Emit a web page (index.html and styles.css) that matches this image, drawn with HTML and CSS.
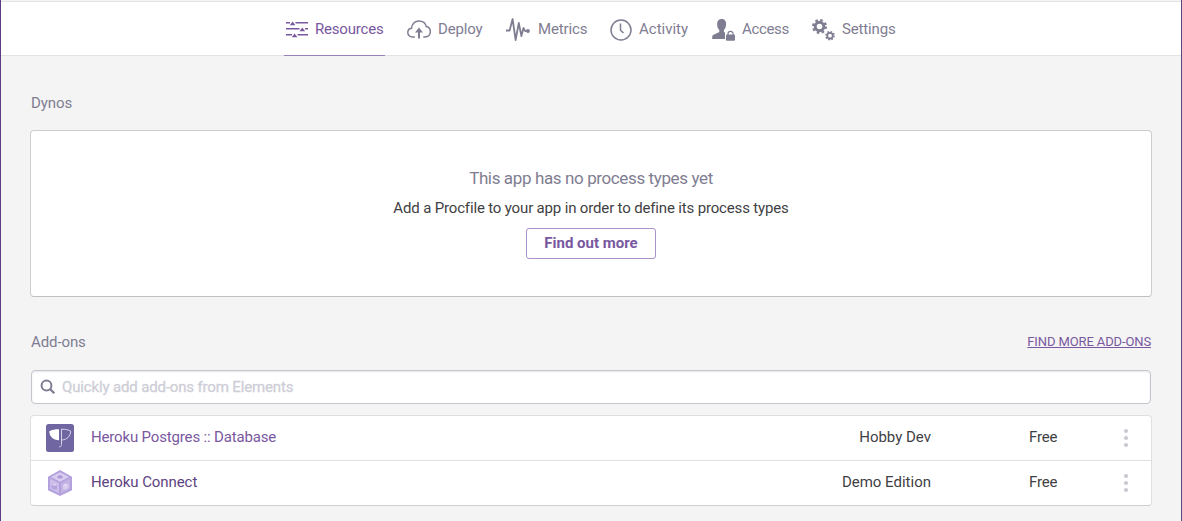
FILE: index.html
```
<!DOCTYPE html>
<html lang="en">
<head>
<meta charset="utf-8">
<title>Resources</title>
<link rel="stylesheet" href="styles.css">
</head>
<body>
<div class="page">
  <nav class="tabs">
    <a class="tab tab-resources active"><svg class="icon" viewBox="0 0 24 24"><g stroke="currentColor" stroke-width="1.6" fill="none"><path d="M0 5.700h4M9.500 5.700H22M0 11.700h13.500M19 11.700h3M0 17.700h6M11.500 17.700H22"/></g><path fill="currentColor" d="M3.800 8.300 6.600 4.500l2.800 3.800zM13.500 14.300l2.800-3.800 2.800 3.800zM5.800 20.300l2.800-3.800 2.800 3.800z"/></svg><span>Resources</span></a>
    <a class="tab tab-deploy"><svg class="icon" viewBox="0 0 24 24"><path fill="none" stroke="currentColor" stroke-width="1.500" stroke-linecap="round" d="M7.300 20H5.500C2.800 20 .8 18.200.8 15.600c0-2.300 1.500-4 3.700-4.300C4.800 7 7.900 4 12 4c3.800 0 6.500 2.200 7.300 5.600 2.400.5 4 2.500 4 5 0 3.100-2.200 5.400-5 5.400h-1.500"/><path fill="currentColor" d="M12 10.500l4 5h-3v6h-2v-6H8z"/></svg><span>Deploy</span></a>
    <a class="tab tab-metrics"><svg class="icon" viewBox="0 0 24 24"><path fill="none" stroke="currentColor" stroke-width="1.800" stroke-linejoin="round" d="M0 13.500h3.600L6.600 2l3 21 3.200-17 2.600 13 2.100-8 1.700 3.200H22"/><circle cx="22" cy="14" r="1.900" fill="currentColor"/></svg><span>Metrics</span></a>
    <a class="tab tab-activity"><svg class="icon" viewBox="0 0 24 24"><circle cx="11" cy="13" r="10" fill="none" stroke="currentColor" stroke-width="1.500"/><path d="M10.500 6.500v6.700l3 2.800" fill="none" stroke="currentColor" stroke-width="1.500"/></svg><span>Activity</span></a>
    <a class="tab tab-access"><svg class="icon" viewBox="0 0 24 24"><path fill="currentColor" d="M9.600 2c3 0 4.700 2 4.500 5.200-.1 2.700-.9 4.600-2.200 5.800v2l3 1.400h-1.500V22H.2v-2.200c0-1 .6-1.700 1.500-2.100L7.300 15v-2C6 11.800 5.200 9.900 5.100 7.200 5 4 6.700 2 9.600 2z"/><path d="M13 24v-9l4-2.500h7V24z" fill="#fff"/><rect x="14" y="17.600" width="9" height="6.200" rx="1" fill="currentColor"/><path d="M16 18v-1.200a2.500 2.500 0 0 1 5 0V18" fill="none" stroke="currentColor" stroke-width="1.200"/></svg><span>Access</span></a>
    <a class="tab tab-settings"><svg class="icon" viewBox="0 0 24 24"><g fill="none" stroke="currentColor"><circle cx="7.500" cy="9.500" r="4.300" stroke-width="3"/><circle cx="7.500" cy="9.500" r="6.400" stroke-width="2.200" stroke-dasharray="2.513 2.513"/><circle cx="18" cy="18.700" r="2.800" stroke-width="1.800"/><circle cx="18" cy="18.700" r="4.100" stroke-width="1.500" stroke-dasharray="1.610 1.610"/></g></svg><span>Settings</span></a>
  </nav>
  <main class="content">
    <h2 class="heading">Dynos</h2>
    <section class="empty">
      <p class="empty-title">This app has no process types yet</p>
      <p class="empty-text">Add a Procfile to your app in order to define its process types</p>
      <button class="button">Find out more</button>
    </section>
    <div class="section-head"><h2 class="heading">Add-ons</h2><a class="more">FIND MORE ADD-ONS</a></div>
    <div class="search">
      <svg class="search-icon" viewBox="0 0 16 16"><circle cx="6.500" cy="6.500" r="4.900" fill="none" stroke="currentColor" stroke-width="2"/><path d="M10 10l4.300 4.300" stroke="currentColor" stroke-width="2.300"/></svg>
      <span>Quickly add add-ons from Elements</span>
    </div>
    <div class="list">
      <div class="row">
        <svg class="logo" viewBox="0 0 28 28"><rect width="28" height="28" rx="2.500" fill="#7067a2"/><path d="M13 5.200v11C7 16.200 3.300 12.200 3.300 7.300 6 5.600 9 5.200 13 5.200z" fill="#fff"/><path d="M15.300 5.200c4.500 0 7 .5 9.400 2-.3 5-3.600 8.500-9 8.800M15.500 5v15.500c0 1.600-.7 2.400-2.300 2.400" fill="none" stroke="#d8d4e8" stroke-width="1"/></svg>
        <span class="name name-postgres">Heroku Postgres :: Database</span><span class="plan">Hobby Dev</span><span class="price">Free</span>
        <svg class="dots" viewBox="0 0 6 20"><circle cx="3" cy="3" r="2.100"/><circle cx="3" cy="10" r="2.100"/><circle cx="3" cy="17" r="2.100"/></svg>
      </div>
      <div class="row">
        <svg class="logo" viewBox="0 0 28 28"><path d="M14 1l12 6.700v13.600L14 27 2 21.300V7.700z" fill="#b3a1de"/><path d="M14 3.200l9 4.900-9 4.700-9-4.700z" fill="#d8cdef"/><path d="M4 9.500l9 4.700v10.300l-9-4.700z" fill="#cbbfe9"/><path d="M24 9.500l-9 4.700v10.300l9-4.700z" fill="#c2b3e4"/><ellipse cx="14" cy="7.900" rx="2.800" ry="1.700" fill="#ab98da"/><path d="M5.500 16l3-1.500 2.500 2v3.500l-3 .8-2.500-2z" fill="#b5a3df"/><path d="M22.500 16l-3-1.500-2.500 2v3.500l3 .8 2.500-2z" fill="#d8cdef"/><path d="M6 15.800l2.500 1 2.300-.7-2.300-1.500zM17.200 16.200l2.500.8 2.500-1-2.500-1.500z" fill="#e1d9f3"/></svg>
        <span class="name name-connect">Heroku Connect</span><span class="plan">Demo Edition</span><span class="price">Free</span>
        <svg class="dots" viewBox="0 0 6 20"><circle cx="3" cy="3" r="2.100"/><circle cx="3" cy="10" r="2.100"/><circle cx="3" cy="17" r="2.100"/></svg>
      </div>
    </div>
  </main>
</div>
</body>
</html>
```
FILE: styles.css
```
* { box-sizing: border-box; }
body { margin: 0; background: #f4f4f4; font: 15px/20px Roboto, "Liberation Sans", sans-serif; color: #3f3f44; }
.page { height: 521px; border-left: 1px solid #5a3d82; border-right: 1px solid #5a4a7c; padding-top: 1px; overflow: hidden; white-space: nowrap; }
.tabs { display: flex; height: 55px; padding-left: 283px; background: #fff; border-top: 1px solid #e3e3e6; border-bottom: 1px solid #e3e3e6; color: #7f7d92; }
.tab { display: flex; height: 54px; padding: 17px 2px 0; letter-spacing: -.15px; }
.tab span { flex: none; margin-left: 5px; }
.tab.active { color: #79589f; border-bottom: 1px solid #9a80bb; }
.icon { flex: none; width: 24px; height: 24px; margin-top: -2px; }
.tab-resources { width: 101px; margin-right: 20px; letter-spacing: -.2px; }
.tab-deploy { width: 79px; margin-right: 20px; }
.tab-deploy span { margin-left: 7px; }
.tab-metrics { width: 84px; margin-right: 20px; }
.tab-metrics span { margin-left: 8px; }
.tab-activity { width: 82px; margin-right: 20px; letter-spacing: 0; }
.tab-access { width: 80px; margin-right: 20px; letter-spacing: -.35px; }
.tab-access span, .tab-settings span { margin-left: 6px; }
.tab-settings { width: 88px; }
.content { padding: 37px 29px 0; }
h2, p { margin: 0; }
.heading { font-size: 15px; line-height: 20px; font-weight: 400; color: #7f7d92; padding-left: 1px; letter-spacing: -.1px; }
.empty { display: flex; flex-direction: column; align-items: center; height: 167px; margin-top: 17px; padding-top: 35px; background: #fff; border: 1px solid #cdcdd0; border-bottom-color: #bfbfc4; border-radius: 4px; }
.empty-title { font-size: 17px; line-height: 24px; color: #7f7d92; letter-spacing: -.38px; }
.empty-text { margin-top: 8px; line-height: 20px; letter-spacing: -.16px; }
.button { width: 130px; height: 31px; margin-top: 10px; padding: 0 0 1px; border: 1px solid #ab91ca; border-radius: 3px; background: #fff; color: #79589f; font: bold 15px Roboto, sans-serif; }
.section-head { display: flex; justify-content: space-between; margin-top: 35px; padding-right: 1px; }
.more { font-size: 13px; color: #79589f; text-decoration: underline; letter-spacing: -.12px; }
.search { display: flex; align-items: center; height: 34px; margin: 18px 1px 0; padding-left: 9px; border: 1px solid #c5c5ce; border-radius: 4px; background: #fff; box-shadow: inset 0 1px 2px #e7e7ec; color: #ceced7; letter-spacing: -.15px; -webkit-text-stroke: .3px #ceced7; }
.search-icon { width: 16px; height: 16px; margin: 0 6px 0 -1px; color: #7f7d92; }
.list { margin-top: 11px; border: 1px solid #dfdfe2; border-bottom-color: #cfcfd3; border-radius: 4px; background: #fff; }
.row { display: flex; align-items: center; height: 45px; padding: 0 22px 0 15px; }
.row + .row { height: 44px; }
.row:first-child { border-bottom: 1px solid #dfdfe2; }
.row span { padding-bottom: 2px; }
.row .dots { margin-bottom: 1px; }
.logo { width: 28px; height: 28px; margin-right: 17px; }
.name { flex: 1; color: #79589f; letter-spacing: -.16px; }
.name-connect { color: #5d4382; letter-spacing: -.08px; }
.price { width: 28px; margin: 0 66px 0 98px; letter-spacing: -.2px; }
.dots { width: 6px; height: 20px; fill: #cacad1; }
```
